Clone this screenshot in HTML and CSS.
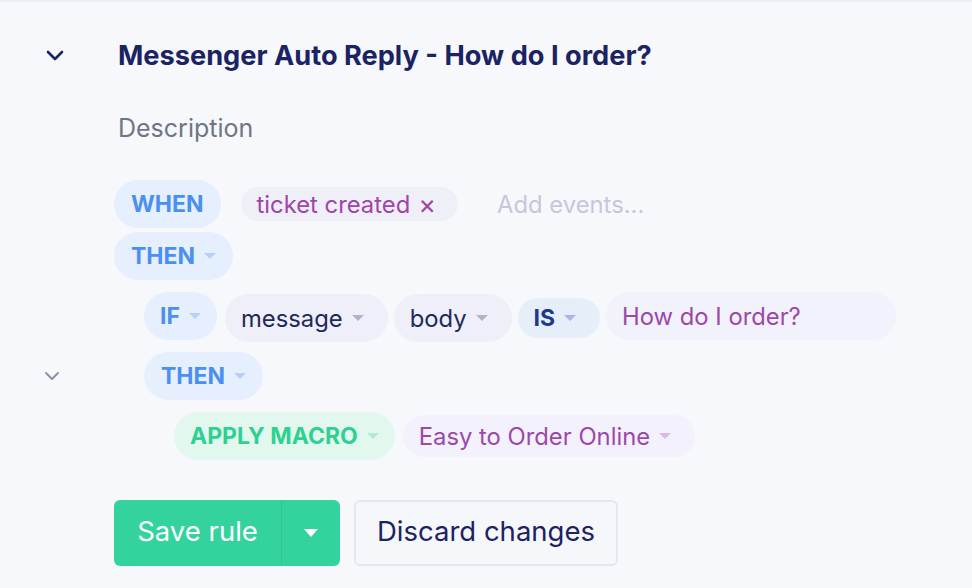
FILE: index.html
```html
<!DOCTYPE html>
<html>
<head>
<meta charset="utf-8">
<link rel="stylesheet" href="styles.css">
</head>
<body>
<div class="topline"></div>
<div class="rule">
  <div class="row title-row">
    <div class="gutter">
      <svg class="chev" width="18" height="11" viewBox="0 0 18 11"><path d="M2 2 L9 9 L16 2" fill="none" stroke="#1c2463" stroke-width="2.6" stroke-linecap="round" stroke-linejoin="round"/></svg>
    </div>
    <h1 class="title">Messenger Auto Reply - How do I order?</h1>
  </div>
  <div class="row desc-row">
    <div class="gutter"></div>
    <div class="desc">Description</div>
  </div>

  <div class="row line when-row">
    <div class="gutter"></div>
    <div class="pills">
      <span class="pill kw">WHEN</span>
      <span class="pill tag">ticket created <span class="x">×</span></span>
      <span class="placeholder">Add events...</span>
    </div>
  </div>

  <div class="row line">
    <div class="gutter"></div>
    <div class="pills">
      <span class="pill kw">THEN<i class="caret c-blue"></i></span>
    </div>
  </div>

  <div class="row line if-row">
    <div class="gutter"></div>
    <div class="pills indent1">
      <span class="pill kw kw-if">IF<i class="caret c-blue"></i></span>
      <span class="pill field f-msg">message<i class="caret c-gray"></i></span>
      <span class="pill field f-body">body<i class="caret c-gray"></i></span>
      <span class="pill op">IS<i class="caret c-op"></i></span>
      <span class="pill value">How do I order?</span>
    </div>
  </div>

  <div class="row line then2-row">
    <div class="gutter g2">
      <svg class="chev2" width="16" height="10" viewBox="0 0 16 10"><path d="M2 2 L8 8 L14 2" fill="none" stroke="#8e91a8" stroke-width="2" stroke-linecap="round" stroke-linejoin="round"/></svg>
    </div>
    <div class="pills indent1">
      <span class="pill kw">THEN<i class="caret c-blue"></i></span>
    </div>
  </div>

  <div class="row line action-row">
    <div class="gutter"></div>
    <div class="pills indent2">
      <span class="pill action">APPLY MACRO<i class="caret c-green"></i></span>
      <span class="pill macro">Easy to Order Online<i class="caret c-pink"></i></span>
    </div>
  </div>

  <div class="row buttons-row">
    <div class="gutter"></div>
    <div class="buttons">
      <div class="btn-group">
        <button class="btn save">Save rule</button>
        <button class="btn save-drop"><i class="caret c-white"></i></button>
      </div>
      <button class="btn discard">Discard changes</button>
    </div>
  </div>
</div>
</body>
</html>
```

FILE: styles.css
```css
* { box-sizing: border-box; }
html, body { margin: 0; padding: 0; }
body {
  background: #f7f8fc;
  font-family: Inter, "Noto Sans", sans-serif;
  width: 972px;
  height: 588px;
  overflow: hidden;
}
.topline { height: 2px; background: #eceef3; }
.rule { display: flex; flex-direction: column; }
.row { display: flex; align-items: center; }
.gutter { width: 114px; flex: none; display: flex; align-items: center; }
.title-row { height: 50px; margin-top: 28px; }
.chev { margin-left: 46px; }
.title {
  margin: 0 0 0 4px;
  font-size: 27.2px;
  font-weight: 700;
  color: #1b2362;
}
.desc-row { height: 48px; margin-top: 24px; }
.desc { margin-left: 4px; font-size: 25px; color: #6e7684; }
.line { min-height: 48px; }
.when-row { margin-top: 28px; }
.line + .line { margin-top: 4px; }
.if-row { margin-top: 10px !important; }
.then2-row { margin-top: 10px !important; }
.action-row { margin-top: 12px !important; }
.g2 { padding-left: 44px; }
.pills { display: flex; align-items: center; gap: 6px; }
.indent1 { margin-left: 30px; }
.indent2 { margin-left: 60px; }
.pill {
  display: inline-flex;
  align-items: center;
  height: 48px;
  border-radius: 24px;
  padding: 0 17px;
  font-size: 23.8px;
  white-space: nowrap;
}
.kw { background: #e6effd; color: #4b8ff0; font-weight: 700; font-size: 23px; }
.kw-if { padding: 0 16px 0 16px; }
.tag { background: #efeff8; color: #a045a9; height: 34px; padding: 0 22px 0 16px; margin-left: 14px; }
.x { margin-left: 8px; font-size: 27px; }
.placeholder { color: #c6c7da; font-size: 23.8px; margin-left: 33px; }
.field { background: #eeeff8; color: #1f295d; padding: 0 24px 0 16px; margin-top: 4px; }
.f-msg { margin-left: 2px; }
.op { background: #e6eefa; color: #1d3a8f; font-weight: 700; font-size: 23px; height: 40px; padding: 0 24px 0 16px; margin-top: 4px; }
.value { background: #f1f2fb; color: #9d48a9; padding: 0 16px; width: 290px; }
.action { background: #e2f8ef; color: #2fd092; font-weight: 700; font-size: 23px; padding: 0 16px 0 16px; }
.macro { background: #f2f1fc; color: #9d48a9; height: 42px; padding: 0 24px 0 16px; margin-left: 2px; }
.caret {
  display: inline-block;
  width: 0; height: 0;
  border-left: 6px solid transparent;
  border-right: 6px solid transparent;
  border-top: 6px solid;
  margin-left: 9px;
}
.c-blue { color: #b8d0f7; }
.c-gray { color: #b1b3c9; }
.c-op { color: #aab6dd; }
.c-green { color: #aeecd0; }
.c-pink { color: #dcb8e4; }
.c-white { color: #ffffff; border-left-width: 7px; border-right-width: 7px; border-top-width: 8px; margin: 0; }
.buttons-row { margin-top: 40px; }
.buttons { display: flex; gap: 14px; }
.btn-group { display: flex; border-radius: 6px; overflow: hidden; }
.btn {
  font-family: Inter, "Noto Sans", sans-serif;
  font-size: 27.5px;
  height: 66px;
  border: none;
  cursor: pointer;
  line-height: 1;
}
.save { background: #34d39e; color: #fff; width: 168px; padding: 0 0 2px; border-right: 1px solid #2fc693; }
.save-drop { background: #34d39e; width: 58px; display: flex; align-items: center; justify-content: center; padding: 0; }
.discard {
  background: #f6f7fb;
  border: 2px solid #e5e7ee;
  border-radius: 6px;
  color: #1b2362;
  width: 264px;
  padding: 0 0 2px;
}
```
